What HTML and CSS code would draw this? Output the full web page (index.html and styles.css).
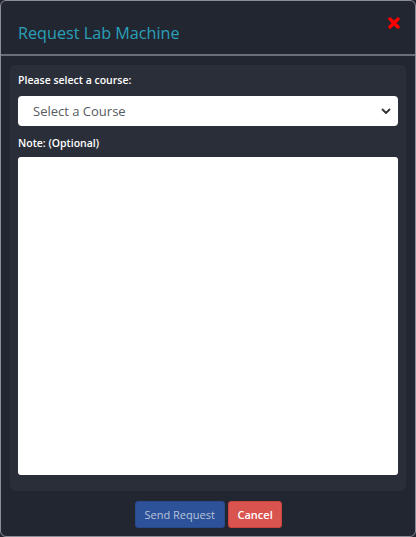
FILE: index.html
```html
<!DOCTYPE html>
<html>
<head>
<meta charset="utf-8">
<link rel="stylesheet" href="styles.css">
</head>
<body>
<div class="modal">
  <div class="modal-header">
    <h2 class="modal-title">Request Lab Machine</h2>
    <span class="close" aria-label="Close">
      <svg width="12" height="12" viewBox="0 0 12 12"><path d="M2 2 L10 10 M10 2 L2 10" stroke="#ff0000" stroke-width="3.4" stroke-linecap="round"/></svg>
    </span>
  </div>
  <div class="modal-body">
    <div class="panel">
      <label class="field-label">Please select a course:</label>
      <div class="select">
        <span class="select-text">Select a Course</span>
        <svg class="chev" width="10" height="7" viewBox="0 0 10 7"><path d="M1.5 1.5 L5 5 L8.5 1.5" fill="none" stroke="#333" stroke-width="1.8" stroke-linecap="round" stroke-linejoin="round"/></svg>
      </div>
      <label class="field-label note">Note: (Optional)</label>
      <div class="textarea"></div>
    </div>
  </div>
  <div class="modal-footer">
    <button class="btn btn-primary">Send Request</button>
    <button class="btn btn-danger">Cancel</button>
  </div>
</div>
</body>
</html>
```
FILE: styles.css
```css
html, body {
  margin: 0;
  padding: 0;
  background: #23262f;
}
body {
  font-family: "Open Sans", "Noto Sans", sans-serif;
}
.modal {
  box-sizing: border-box;
  width: 416px;
  height: 537px;
  border: 1px solid #8b8e94;
  border-radius: 6px;
  background: #222631;
  display: flex;
  flex-direction: column;
}
.modal-header {
  position: relative;
  border-bottom: 2px solid #6a6e76;
  display: flex;
  align-items: flex-end;
  padding: 0 17px 10px;
  box-sizing: border-box;
  height: 55px;
}
.modal-title {
  margin: 0;
  font-weight: 400;
  font-size: 16.2px;
  line-height: 22px;
  color: #2aa0b9;
}
.close {
  position: absolute;
  right: 15px;
  top: 16px;
  width: 12px;
  height: 12px;
  display: block;
}
.close svg { display: block; }
.modal-body {
  padding: 9px 9px 0;
}
.panel {
  background: #2a2e39;
  border-radius: 5px;
  padding: 8px 8px 16px;
  display: flex;
  flex-direction: column;
}
.field-label {
  color: #ffffff;
  font-size: 10.5px;
  font-weight: 600;
  line-height: 14px;
  display: block;
}
.select {
  margin-top: 9px;
  height: 30px;
  background: #ffffff;
  border-radius: 4px;
  display: flex;
  align-items: center;
  justify-content: space-between;
  padding: 0 7px 0 15px;
}
.select-text {
  font-size: 13px;
  color: #555a61;
}
.chev { display: block; }
.note {
  margin-top: 10px;
}
.textarea {
  margin-top: 7px;
  height: 318px;
  background: #ffffff;
  border-radius: 3px;
}
.modal-footer {
  display: flex;
  justify-content: center;
  gap: 3px;
  padding-top: 10px;
}
.btn {
  font-family: "Open Sans", "Noto Sans", sans-serif;
  font-size: 11px;
  height: 27px;
  border: 1px solid transparent;
  border-radius: 3px;
  padding: 0 9px;
  white-space: nowrap;
  cursor: pointer;
}
.btn-primary {
  background: #2d5299;
  border-color: #28498a;
  color: #b8c4dc;
  width: 90px;
}
.btn-danger {
  background: #d9534f;
  border-color: #c9443f;
  color: #ffffff;
  font-weight: 600;
  width: 54px;
}
```
